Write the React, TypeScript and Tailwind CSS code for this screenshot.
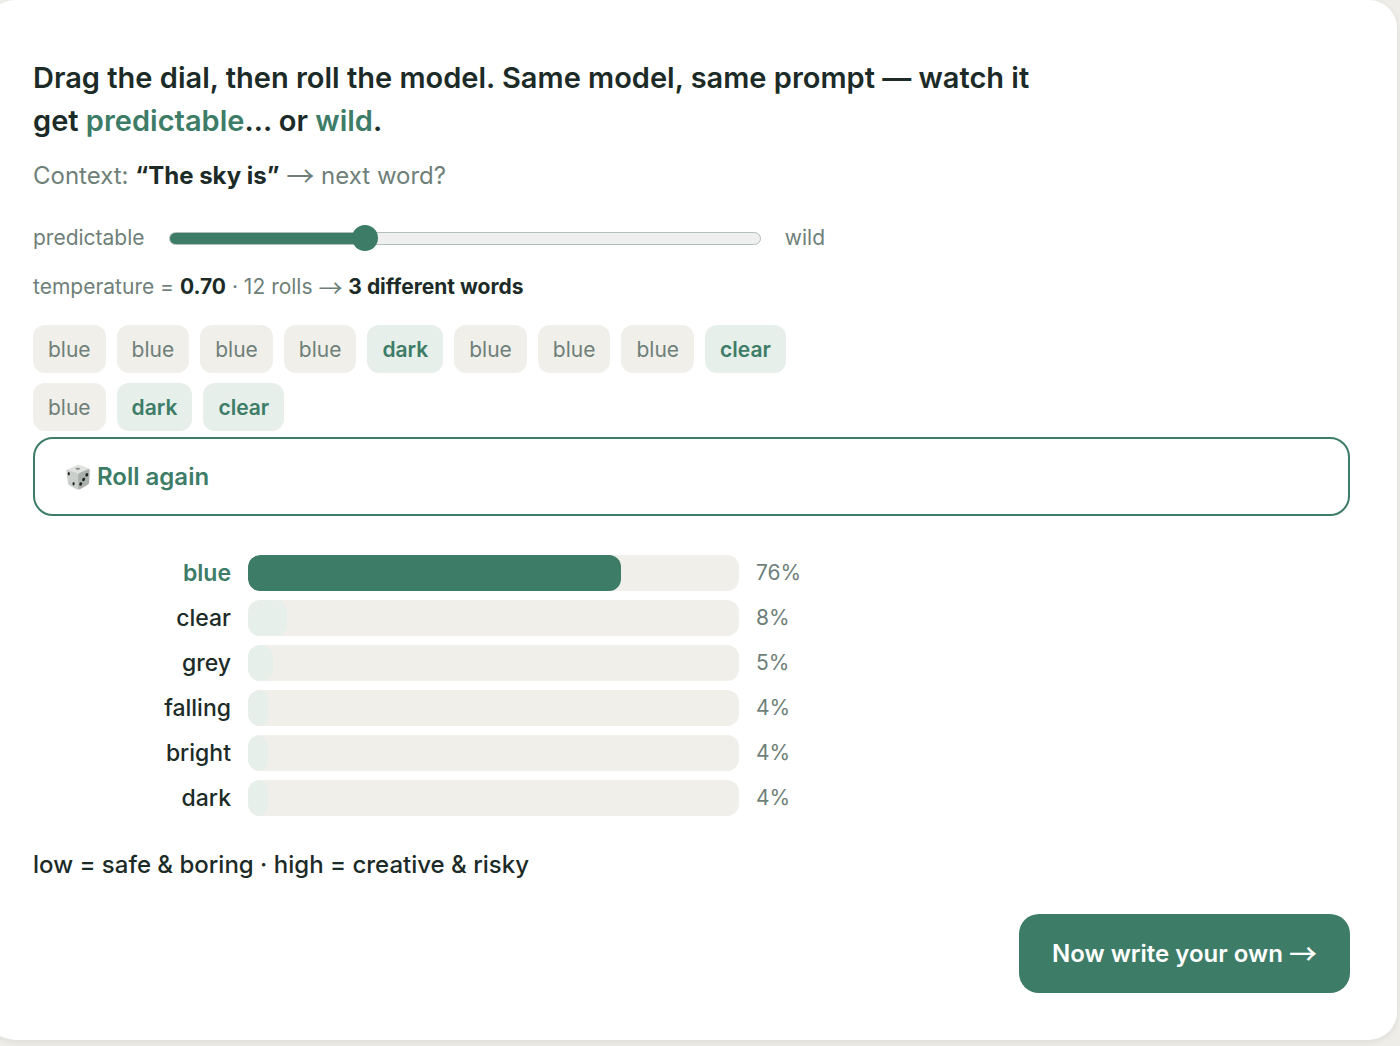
import { useState } from 'react';

const ROLLS = ['blue', 'blue', 'blue', 'blue', 'dark', 'blue', 'blue', 'blue', 'clear', 'blue', 'dark', 'clear'];

const CANDIDATES = [
  { word: 'blue', pct: 76 },
  { word: 'clear', pct: 8 },
  { word: 'grey', pct: 5 },
  { word: 'falling', pct: 4 },
  { word: 'bright', pct: 4 },
  { word: 'dark', pct: 4 },
];

const TOP_WORD = CANDIDATES[0].word;
const MIN_TEMP = 0.2;
const MAX_TEMP = 1.75;

// Inter's own arrow is short and heavy, the CJK face has a long thin one that sits higher
function Arrow({ className }: { className: string }) {
  return <span className={`align-[-3px] font-['Noto_Sans_CJK_JP',sans-serif] leading-none ${className}`}>→</span>;
}

function DiceIcon() {
  return (
    <svg viewBox="0 0 26 26" className="h-[26px] w-[26px] shrink-0" aria-hidden="true">
      <path d="M2.2 5.6 12 1.2Q13.4.7 14.8 1.1L23 3.9Q24.6 4.6 24.3 6L13.4 10.2 1.4 6.6Z" fill="#dfe2df" />
      <path d="M1.3 6.4Q1.3 5.8 2.3 5.9L11.8 8.8Q13 9.4 13.1 10.8L13.3 25.4Q12.2 25.6 11 25L4.4 21.3Q3.2 20.5 3 19.2Z" fill="#cbcfcc" />
      <path d="M13 10.8Q13.2 9.4 14.5 8.9L23.2 5.2Q24.7 4.8 24.7 6.4L24.2 18.6Q24 20 22.8 20.8L15.4 25Q14.2 25.6 13.2 25.4Z" fill="#aab0ac" />
      <ellipse cx="12.8" cy="4.7" rx="2.3" ry="1" fill="#858a87" />
      <ellipse cx="3.8" cy="9.8" rx="1.1" ry="1.7" fill="#222725" />
      <ellipse cx="8.6" cy="19.8" rx="1.1" ry="1.8" fill="#222725" />
      <ellipse cx="21.8" cy="10.8" rx="1.4" ry="1.8" fill="#222725" transform="rotate(25 21.8 10.8)" />
      <ellipse cx="18.6" cy="15.5" rx="1.4" ry="1.8" fill="#222725" transform="rotate(25 18.6 15.5)" />
      <ellipse cx="15.7" cy="20" rx="1.4" ry="1.8" fill="#222725" transform="rotate(25 15.7 20)" />
    </svg>
  );
}

function TemperatureSlider({ value, onChange }: { value: number; onChange: (v: number) => void }) {
  const ratio = (value - MIN_TEMP) / (MAX_TEMP - MIN_TEMP);
  const fill = `calc(13px + (100% - 26px) * ${ratio})`;

  return (
    <div className="flex items-center gap-6 text-[21px] leading-[30px] text-[#6f7f79]">
      <label htmlFor="temperature">predictable</label>
      <input
        id="temperature"
        type="range"
        min={MIN_TEMP}
        max={MAX_TEMP}
        step={0.05}
        value={value}
        onChange={(e) => onChange(Number(e.target.value))}
        style={{ backgroundImage: `linear-gradient(to right, #3d7c67 ${fill}, transparent ${fill})` }}
        className="h-[13px] min-w-0 flex-1 cursor-pointer appearance-none rounded-full border border-[#b3bfba] bg-[#efefef] bg-origin-border [&::-webkit-slider-thumb]:h-[26px] [&::-webkit-slider-thumb]:w-[26px] [&::-webkit-slider-thumb]:appearance-none [&::-webkit-slider-thumb]:rounded-full [&::-webkit-slider-thumb]:bg-[#3d7c67]"
      />
      <span>wild</span>
    </div>
  );
}

function RollChip({ word }: { word: string }) {
  const common = word === TOP_WORD;
  return (
    <li
      className={
        common
          ? 'rounded-xl bg-[#f0efea] px-[15px] pt-[9px] pb-[7px] text-[21px] leading-8 text-[#6f7f79]'
          : 'rounded-xl bg-[#e6efea] px-[15px] pt-[9px] pb-[7px] text-[21px] leading-8 font-semibold text-[#3d7c67]'
      }
    >
      {word}
    </li>
  );
}

function ProbabilityRow({ word, pct }: { word: string; pct: number }) {
  const top = word === TOP_WORD;
  return (
    <div className="grid grid-cols-[198px_1fr_69px] items-center gap-x-[17px]">
      <span
        className={
          top
            ? 'text-right text-[23px] leading-9 font-semibold text-[#3d7c67]'
            : 'text-right text-[23px] leading-9 font-medium text-[#1c2b27]'
        }
      >
        {word}
      </span>
      <div className="h-9 overflow-hidden rounded-xl bg-[#f0efea]">
        <div
          className={top ? 'h-full rounded-xl bg-[#3d7c67]' : 'h-full rounded-xl bg-[#e6efea]'}
          style={{ width: `${pct}%` }}
        />
      </div>
      <span className="text-[21px] leading-9 text-[#6f7f79]">{pct}%</span>
    </div>
  );
}

export default function App() {
  const [temperature, setTemperature] = useState(0.7);
  const distinct = new Set(ROLLS).size;

  return (
    <div className="min-h-screen overflow-hidden bg-[#eeede8] pb-1.5 font-['Inter',sans-serif] text-[#1c2b27]">
      <main className="mr-[3px] -ml-[13px] rounded-[28px] bg-white pt-14 pr-[47px] pb-[47px] pl-[46px] shadow-[0_2px_6px_rgba(28,43,39,0.08)]">
        <h1 className="max-w-[1020px] text-[29px] leading-[43px] font-semibold">
          Drag the dial, then roll the model. Same model, same prompt — watch it get{' '}
          <span className="text-[#3d7c67]">predictable</span>… or <span className="text-[#3d7c67]">wild</span>.
        </h1>

        <p className="mt-4 text-[24px] leading-9 text-[#6f7f79]">
          Context: <strong className="font-bold text-[#1c2b27]">“The sky is”</strong>{' '}
          <Arrow className="text-[28px]" /> next word?
        </p>

        <div className="mt-[29px] max-w-[792px]">
          <TemperatureSlider value={temperature} onChange={setTemperature} />

          <p className="mt-[19px] text-[21px] leading-[30px] text-[#6f7f79]">
            temperature = <strong className="font-bold text-[#1c2b27]">{temperature.toFixed(2)}</strong> · {ROLLS.length}{' '}
            rolls <Arrow className="text-[24px]" />{' '}
            <strong className="font-bold text-[#1c2b27]">{distinct} different words</strong>
          </p>

          <ul className="mt-[23px] flex flex-wrap gap-x-[11px] gap-y-2.5">
            {ROLLS.map((word, i) => (
              <RollChip key={i} word={word} />
            ))}
          </ul>
        </div>

        <button
          type="button"
          className="mt-1.5 flex w-full cursor-pointer items-center gap-1.5 rounded-[20px] border-2 border-[#3d7c67] px-[30px] py-5 text-left text-[24px] leading-[35px] font-semibold text-[#3d7c67]"
        >
          <DiceIcon />
          Roll again
        </button>

        <div className="mt-[39px] flex max-w-[792px] flex-col gap-[9px]">
          {CANDIDATES.map((c) => (
            <ProbabilityRow key={c.word} word={c.word} pct={c.pct} />
          ))}
        </div>

        <p className="mt-[31px] text-[24px] leading-9 font-medium">low = safe &amp; boring · high = creative &amp; risky</p>

        <div className="mt-[31px] flex justify-end">
          <button
            type="button"
            className="cursor-pointer rounded-[20px] bg-[#3d7c67] px-[33px] py-[22px] text-[24px] leading-[35px] font-semibold text-white"
          >
            Now write your own <Arrow className="text-[28px] font-medium" />
          </button>
        </div>
      </main>
    </div>
  );
}
